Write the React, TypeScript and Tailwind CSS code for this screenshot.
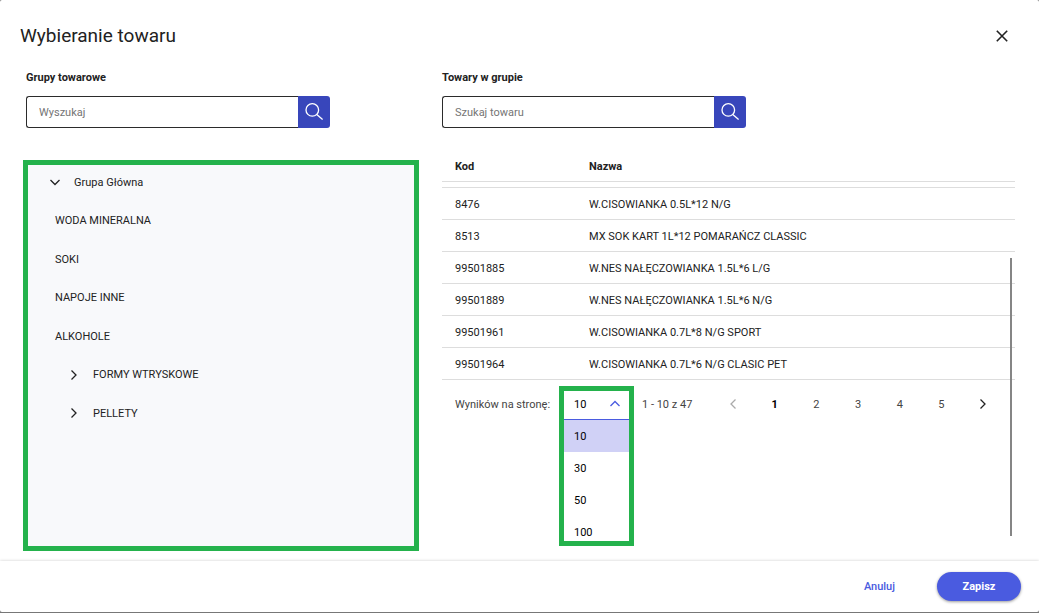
import { useState } from "react"

const leafGroups = ["WODA MINERALNA", "SOKI", "NAPOJE INNE", "ALKOHOLE"]
const nestedGroups = ["FORMY WTRYSKOWE", "PELLETY"]

const products = [
  { code: "8476", name: "W.CISOWIANKA 0.5L*12 N/G" },
  { code: "8513", name: "MX SOK KART 1L*12 POMARAŃCZ CLASSIC" },
  { code: "99501885", name: "W.NES NAŁĘCZOWIANKA 1.5L*6 L/G" },
  { code: "99501889", name: "W.NES NAŁĘCZOWIANKA 1.5L*6 N/G" },
  { code: "99501961", name: "W.CISOWIANKA 0.7L*8 N/G SPORT" },
  { code: "99501964", name: "W.CISOWIANKA 0.7L*6 N/G CLASIC PET" },
]

const pageSizes = ["10", "30", "50", "100"]
const pages = [1, 2, 3, 4, 5]

const chevrons = {
  down: "M1.5 4 6 8.5 10.5 4",
  up: "M1.5 8 6 3.5 10.5 8",
  right: "M3.5 1.5 8 6 3.5 10.5",
  left: "M8.5 1.5 4 6 8.5 10.5",
}

function Chevron({ dir }: { dir: keyof typeof chevrons }) {
  return (
    <svg viewBox="0 0 12 12" className="w-3 h-3 shrink-0" fill="none" stroke="currentColor" strokeWidth="1.3" aria-hidden="true">
      <path d={chevrons[dir]} />
    </svg>
  )
}

function SearchBox({ id, label, placeholder }: { id: string; label: string; placeholder: string }) {
  return (
    <form onSubmit={(e) => e.preventDefault()}>
      <label htmlFor={id} className="block font-bold leading-4">{label}</label>
      <div className="flex mt-[10px] h-8 max-w-[304px]">
        <input
          id={id}
          type="text"
          placeholder={placeholder}
          className="flex-1 min-w-0 px-3 pt-[2px] bg-white border border-r-0 border-[#2b2b2b] rounded-l-[3px] placeholder:text-[#757575] outline-none"
        />
        <button type="submit" aria-label="Szukaj" className="w-8 flex items-center justify-center bg-[#3846bb] text-white rounded-r-[3px]">
          <svg viewBox="0 0 20 20" className="w-5 h-5" fill="none" stroke="currentColor" strokeWidth="1.3" aria-hidden="true">
            <circle cx="8.3" cy="7.9" r="6.3" />
            <path d="M12.8 12.4 18.6 17.6" />
          </svg>
        </button>
      </div>
    </form>
  )
}

export default function App() {
  const [pageSize, setPageSize] = useState("10")

  return (
    <div className="min-h-screen flex flex-col bg-[#777] pb-px font-[Roboto,sans-serif] text-[11px] text-[#222]">
      <div role="dialog" aria-labelledby="dialog-title" className="flex-1 flex flex-col bg-white rounded-[2px] overflow-hidden">

        {/* NAGŁÓWEK */}
        <header className="h-[70px] pt-[2px] pl-5 pr-[29px] flex items-center justify-between">
          <h1 id="dialog-title" className="text-[19px]">Wybieranie towaru</h1>
          <button aria-label="Zamknij" className="w-4 h-4 flex items-center justify-center">
            <svg viewBox="0 0 12 12" className="w-3 h-3" fill="none" stroke="currentColor" strokeWidth="1.6" aria-hidden="true">
              <path d="M.8.8 11.2 11.2M11.2.8.8 11.2" />
            </svg>
          </button>
        </header>

        <main className="flex-1 grid grid-cols-[396fr_573fr] gap-[23px] pl-[23px] pr-6 pb-[10px]">

          {/* GRUPY TOWAROWE */}
          <section className="flex flex-col">
            <div className="pl-[3px]">
              <SearchBox id="group-search" label="Grupy towarowe" placeholder="Wyszukaj" />
            </div>
            <div className="mt-8 flex-1 border-[5px] border-[#24b24c] bg-[#f8f9fb]">
              <ul className="h-[264px] flex flex-col justify-between pt-px">
                <li>
                  <button className="h-8 pl-[21px] flex items-center gap-[13px]">
                    <Chevron dir="down" />
                    <span className="pt-[2px]">Grupa Główna</span>
                  </button>
                </li>
                {leafGroups.map((group) => (
                  <li key={group}>
                    <button className="h-8 pl-[27px] pt-[2px]">{group}</button>
                  </li>
                ))}
                {nestedGroups.map((group) => (
                  <li key={group}>
                    <button className="h-8 pl-10 flex items-center gap-[13px]">
                      <Chevron dir="right" />
                      <span className="pt-[2px]">{group}</span>
                    </button>
                  </li>
                ))}
              </ul>
            </div>
          </section>

          {/* TOWARY W GRUPIE */}
          <section className="relative">
            <SearchBox id="product-search" label="Towary w grupie" placeholder="Szukaj towaru" />

            <table className="mt-[22px] w-full table-fixed border-separate border-spacing-0 text-left">
              <thead>
                <tr>
                  <th className="w-[134px] h-8 p-0 pt-1 pl-[13px] border-b border-[#ddd]">Kod</th>
                  <th className="h-8 p-0 pt-1 pl-[13px] border-b border-[#ddd]">Nazwa</th>
                </tr>
              </thead>
              <tbody>
                <tr aria-hidden="true">
                  <td colSpan={2} className="h-[6px] p-0 border-b border-[#ddd]"></td>
                </tr>
                {products.map((product) => (
                  <tr key={product.code}>
                    <td className="h-8 p-0 pt-1 pl-[13px] border-b border-[#ddd]">{product.code}</td>
                    <td className="h-8 p-0 pt-1 pl-[13px] border-b border-[#ddd]">{product.name}</td>
                  </tr>
                ))}
              </tbody>
            </table>

            <div className="h-12 pl-[13px] pr-[11px] flex items-center text-[#444]">
              <label htmlFor="page-size" className="w-[104px] pt-[2px]">Wyników na stronę:</label>

              {/* rozwinięta lista */}
              <div className="relative w-[75px] h-9">
                <div className="absolute inset-x-0 top-0 border-[5px] border-[#24b24c] bg-white text-black">
                  <div className="relative border-b border-[#4a5be0]">
                    <select
                      id="page-size"
                      value={pageSize}
                      onChange={(e) => setPageSize(e.target.value)}
                      className="block w-full h-7 pl-[10px] appearance-none bg-transparent outline-none"
                    >
                      {pageSizes.map((size) => (
                        <option key={size}>{size}</option>
                      ))}
                    </select>
                    <span className="absolute right-2 top-[7px] text-[#4a5be0] pointer-events-none">
                      <Chevron dir="up" />
                    </span>
                  </div>
                  <ul role="listbox" aria-label="Wyników na stronę" className="h-[121px] overflow-hidden">
                    {pageSizes.map((size) => (
                      <li
                        key={size}
                        role="option"
                        aria-selected={size === pageSize}
                        onClick={() => setPageSize(size)}
                        className="h-8 pl-[10px] pt-[2px] flex items-center aria-selected:bg-[#d0d1f6]"
                      >
                        {size}
                      </li>
                    ))}
                  </ul>
                </div>
              </div>

              <span className="ml-2 pt-[2px]">1 - 10 z 47</span>

              <nav aria-label="Strony" className="ml-auto w-[292px] flex">
                <button aria-label="Poprzednia" disabled className="flex-1 flex items-center justify-center text-[#aaa]">
                  <Chevron dir="left" />
                </button>
                {pages.map((page) => (
                  <button key={page} className={page === 1 ? "flex-1 pt-[2px] font-bold text-black" : "flex-1 pt-[2px]"}>
                    {page}
                  </button>
                ))}
                <button aria-label="Następna" className="flex-1 flex items-center justify-center text-[#222]">
                  <Chevron dir="right" />
                </button>
              </nav>
            </div>

            {/* pasek przewijania */}
            <div className="absolute right-[3px] bottom-[15px] w-[2px] h-[278px] bg-[#858585]"></div>
          </section>
        </main>

        {/* STOPKA */}
        <footer className="h-[51px] pr-[18px] flex items-center justify-end gap-[42px] shadow-[0_0_3px_rgba(0,0,0,0.2)]">
          <button className="pt-[2px] font-medium text-[#4a5be0]">Anuluj</button>
          <button className="w-[84px] h-[29px] pt-px rounded-full bg-[#4a5be0] font-bold text-white shadow-[0_1px_3px_rgba(0,0,0,0.4)]">Zapisz</button>
        </footer>
      </div>
    </div>
  )
}
